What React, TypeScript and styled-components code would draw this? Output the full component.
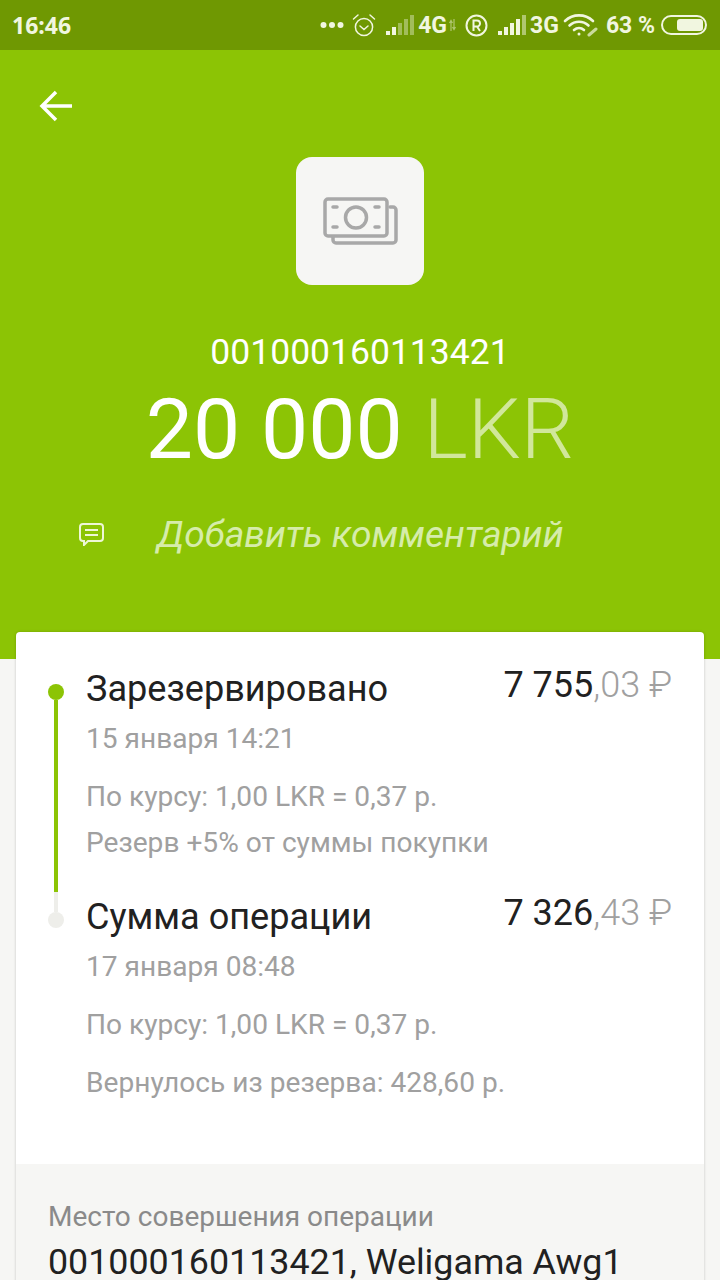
import styled, { createGlobalStyle } from 'styled-components';

const GlobalStyle = createGlobalStyle`
  html, body {
    margin: 0;
    padding: 0;
    background: #f6f6f4;
    font-family: Roboto, "Liberation Sans", sans-serif;
  }
  * {
    box-sizing: border-box;
  }
`;

const Page = styled.div`
  width: 720px;
  height: 1280px;
  overflow: hidden;
  background: #f6f6f4;
`;

const StatusBar = styled.div`
  height: 50px;
  padding: 0 13px 0 12px;
  background: #6f9802;
  color: #f1f6e0;
  display: flex;
  align-items: center;
`;

const Clock = styled.span`
  font-family: "Noto Sans", sans-serif;
  font-size: 23px;
  font-weight: 700;
  margin-right: auto;
`;

const StatusText = styled.span<{ $left: number }>`
  font-size: 23px;
  font-weight: 700;
  margin-left: ${(p) => p.$left}px;
`;

const StatusIcon = styled.svg<{ $left: number }>`
  margin-left: ${(p) => p.$left}px;
  flex: none;
  display: block;
`;

const Header = styled.header`
  height: 609px;
  background: #8cc405;
  color: #fff;
  display: flex;
  flex-direction: column;
  align-items: center;
  padding-top: 107px;
  position: relative;
`;

const BackButton = styled.svg`
  position: absolute;
  left: 38px;
  top: 39px;
`;

const IconTile = styled.div`
  width: 128px;
  height: 128px;
  border-radius: 16px;
  background: #f6f6f4;
  display: flex;
  align-items: center;
  justify-content: center;
`;

const CardNumber = styled.div`
  margin-top: 46px;
  font-size: 35.500px;
  line-height: 42px;
`;

const Amount = styled.div`
  margin-top: 9px;
  font-size: 84px;
  line-height: 96px;
`;

const Currency = styled.span`
  font-weight: 300;
  color: rgba(255, 255, 255, 0.6);
`;

const CommentRow = styled.div`
  width: 100%;
  margin-top: 34px;
  padding-left: 79px;
  display: flex;
  align-items: center;
  gap: 53px;
`;

const CommentText = styled.span`
  font-size: 37.200px;
  font-style: italic;
  line-height: 44px;
  color: #d6ecaa;
`;

const Card = styled.section`
  position: relative;
  margin: -27px 16px 0;
  background: #fff;
  border-radius: 4px;
  box-shadow: 0 0 3px rgba(0, 0, 0, 0.2);
  overflow: hidden;
`;

const Timeline = styled.div`
  padding: 52px 32px 0;
  height: 532px;
`;

const Step = styled.div<{ $height: number }>`
  height: ${(p) => p.$height}px;
  display: flex;
  gap: 22px;
`;

const Rail = styled.div`
  width: 16px;
  flex: none;
  display: flex;
  flex-direction: column;
  align-items: center;
`;

const Dot = styled.div<{ $active?: boolean }>`
  width: 16px;
  height: 16px;
  border-radius: 50%;
  flex: none;
  background: ${(p) => (p.$active ? '#8cc405' : '#eeeeea')};
`;

const RailLine = styled.div<{ $active?: boolean }>`
  width: 4px;
  flex: ${(p) => (p.$active ? '1' : '0 0 20px')};
  background: ${(p) => (p.$active ? '#8cc405' : '#eeeeea')};
`;

const StepBody = styled.div<{ $offset: number }>`
  flex: 1;
  margin-top: ${(p) => p.$offset}px;
`;

const TitleRow = styled.div`
  display: flex;
  justify-content: space-between;
  align-items: baseline;
`;

const StepTitle = styled.div`
  font-size: 36.100px;
  line-height: 44px;
  color: #212121;
`;

const Money = styled.div`
  font-size: 36px;
  line-height: 44px;
  color: #212121;
  position: relative;
  top: -4px;
`;

const Cents = styled.span`
  font-weight: 300;
  color: #a0a0a0;
`;

const Muted = styled.div<{ $top: number }>`
  margin-top: ${(p) => p.$top}px;
  font-size: 28.100px;
  line-height: 36px;
  color: #a0a0a0;
`;

const PlaceBlock = styled.div`
  background: #f6f6f4;
  padding: 35px 32px 0;
  height: 200px;
`;

const PlaceLabel = styled.div`
  font-size: 28px;
  line-height: 36px;
  color: #8a8a8a;
`;

const PlaceValue = styled.div`
  margin-top: 9px;
  font-size: 35.800px;
  line-height: 36px;
  color: #212121;
`;

function SignalIcon({ left, faded }: { left: number; faded: boolean }) {
  const bars = [
    { x: 0, h: 4 },
    { x: 6, h: 8 },
    { x: 12, h: 12 },
    { x: 18, h: 16 },
    { x: 24, h: 20 },
  ];
  return (
    <StatusIcon $left={left} width="28" height="20" viewBox="0 0 28 20">
      {bars.map((b, i) => (
        <rect
          key={b.x}
          x={b.x}
          y={20 - b.h}
          width="4"
          height={b.h}
          fill="#f1f6e0"
          opacity={faded ? (i > 1 ? 0.4 : 1) : i > 3 ? 0.5 : 1}
        />
      ))}
    </StatusIcon>
  );
}

export default function App() {
  return (
    <Page>
      <GlobalStyle />
      <StatusBar>
        <Clock>16:46</Clock>
        <StatusIcon $left={0} width="24" height="8" viewBox="0 0 24 8">
          <circle cx="3.500" cy="4" r="3" fill="#f1f6e0" />
          <circle cx="12" cy="4" r="3" fill="#f1f6e0" />
          <circle cx="20.500" cy="4" r="3" fill="#f1f6e0" />
        </StatusIcon>
        <StatusIcon
          $left={8}
          width="24"
          height="24"
          viewBox="0 0 24 24"
          fill="none"
          stroke="#f1f6e0"
          strokeWidth="1.500"
          strokeLinecap="round"
        >
          <circle cx="12" cy="14" r="8.600" />
          <path d="M8 13l4 3.500 4-3.500M1.500 6L6 2M22.500 6L18 2" />
        </StatusIcon>
        <SignalIcon left={10} faded />
        <StatusText $left={4}>4G</StatusText>
        <StatusIcon
          $left={2}
          width="7"
          height="12"
          viewBox="0 0 7 12"
          fill="none"
          stroke="#f1f6e0"
          strokeOpacity="0.5"
          strokeWidth="1.200"
        >
          <path d="M2 12V2M0.500 4L2 1.500 3.500 4M5 0v10M3.500 8L5 10.500 6.500 8" />
        </StatusIcon>
        <StatusIcon
          $left={9}
          width="23"
          height="23"
          viewBox="0 0 23 23"
          fill="none"
          stroke="#f1f6e0"
          strokeWidth="2"
        >
          <circle cx="11.500" cy="11.500" r="10" />
          <path d="M8.500 17V6.500h3.500a3 3 0 0 1 0 6H8.500M12 12.500l3 4.500" />
        </StatusIcon>
        <SignalIcon left={10} faded={false} />
        <StatusText $left={4}>3G</StatusText>
        <StatusIcon
          $left={4}
          width="36"
          height="24"
          viewBox="0 0 36 24"
          fill="none"
          stroke="#f1f6e0"
          strokeWidth="2.600"
          strokeLinecap="round"
        >
          <path d="M2 8c8-7.500 20-7.500 28 0M6.500 12.500c5.500-5 13.500-5 19 0M11 17c3-2.500 7-2.500 10 0" />
          <circle cx="16" cy="21" r="1.500" fill="#f1f6e0" stroke="none" />
          <path d="M26 22l7-6" strokeWidth="3" strokeOpacity="0.7" />
        </StatusIcon>
        <StatusText $left={7}>63 %</StatusText>
        <StatusIcon $left={6} width="46" height="20" viewBox="0 0 46 20" fill="none">
          <rect x="1" y="1" width="44" height="18" rx="9" stroke="#f1f6e0" strokeWidth="2" />
          <rect x="16" y="4" width="26" height="12" rx="3" fill="#f1f6e0" />
        </StatusIcon>
      </StatusBar>

      <Header>
        <BackButton
          width="36"
          height="34"
          viewBox="0 0 36 34"
          fill="none"
          stroke="#fff"
          strokeWidth="3.500"
        >
          <path d="M34 17H4M18 3L4 17l14 14" />
        </BackButton>
        <IconTile>
          <svg
            width="76"
            height="50"
            viewBox="0 0 76 50"
            fill="none"
            stroke="#a8a8a8"
            strokeWidth="3.500"
            strokeLinecap="round"
          >
            <rect x="3" y="3" width="62" height="37" rx="3" />
            <path d="M68 11h3a3 3 0 0 1 3 3v30a3 3 0 0 1-3 3H14a3 3 0 0 1-3-3v-3" />
            <circle cx="34" cy="21.500" r="10.500" />
            <path d="M11 11h4M53 11h4M11 31h4M53 31h4" />
          </svg>
        </IconTile>
        <CardNumber>001000160113421</CardNumber>
        <Amount>
          20 000 <Currency>LKR</Currency>
        </Amount>
        <CommentRow>
          <svg
            width="25"
            height="23"
            viewBox="0 0 25 23"
            fill="none"
            stroke="#eef7d6"
            strokeWidth="2"
          >
            <path d="M4 1h17a3 3 0 0 1 3 3v11a3 3 0 0 1-3 3H9l-4 4v-4H4a3 3 0 0 1-3-3V4a3 3 0 0 1 3-3z" />
            <path d="M6 7h13M6 12h13" />
          </svg>
          <CommentText>Добавить комментарий</CommentText>
        </CommentRow>
      </Header>

      <Card>
        <Timeline>
          <Step $height={208}>
            <Rail>
              <Dot $active />
              <RailLine $active />
            </Rail>
            <StepBody $offset={-17}>
              <TitleRow>
                <StepTitle>Зарезервировано</StepTitle>
                <Money>
                  7 755<Cents>,03 ₽</Cents>
                </Money>
              </TitleRow>
              <Muted $top={10}>15 января 14:21</Muted>
              <Muted $top={22}>По курсу: 1,00 LKR = 0,37 р.</Muted>
              <Muted $top={10}>Резерв +5% от суммы покупки</Muted>
            </StepBody>
          </Step>
          <Step $height={240}>
            <Rail>
              <RailLine />
              <Dot />
            </Rail>
            <StepBody $offset={3}>
              <TitleRow>
                <StepTitle>Сумма операции</StepTitle>
                <Money>
                  7 326<Cents>,43 ₽</Cents>
                </Money>
              </TitleRow>
              <Muted $top={10}>17 января 08:48</Muted>
              <Muted $top={22}>По курсу: 1,00 LKR = 0,37 р.</Muted>
              <Muted $top={22}>Вернулось из резерва: 428,60 р.</Muted>
            </StepBody>
          </Step>
        </Timeline>
        <PlaceBlock>
          <PlaceLabel>Место совершения операции</PlaceLabel>
          <PlaceValue>001000160113421, Weligama Awg1</PlaceValue>
        </PlaceBlock>
      </Card>
    </Page>
  );
}
